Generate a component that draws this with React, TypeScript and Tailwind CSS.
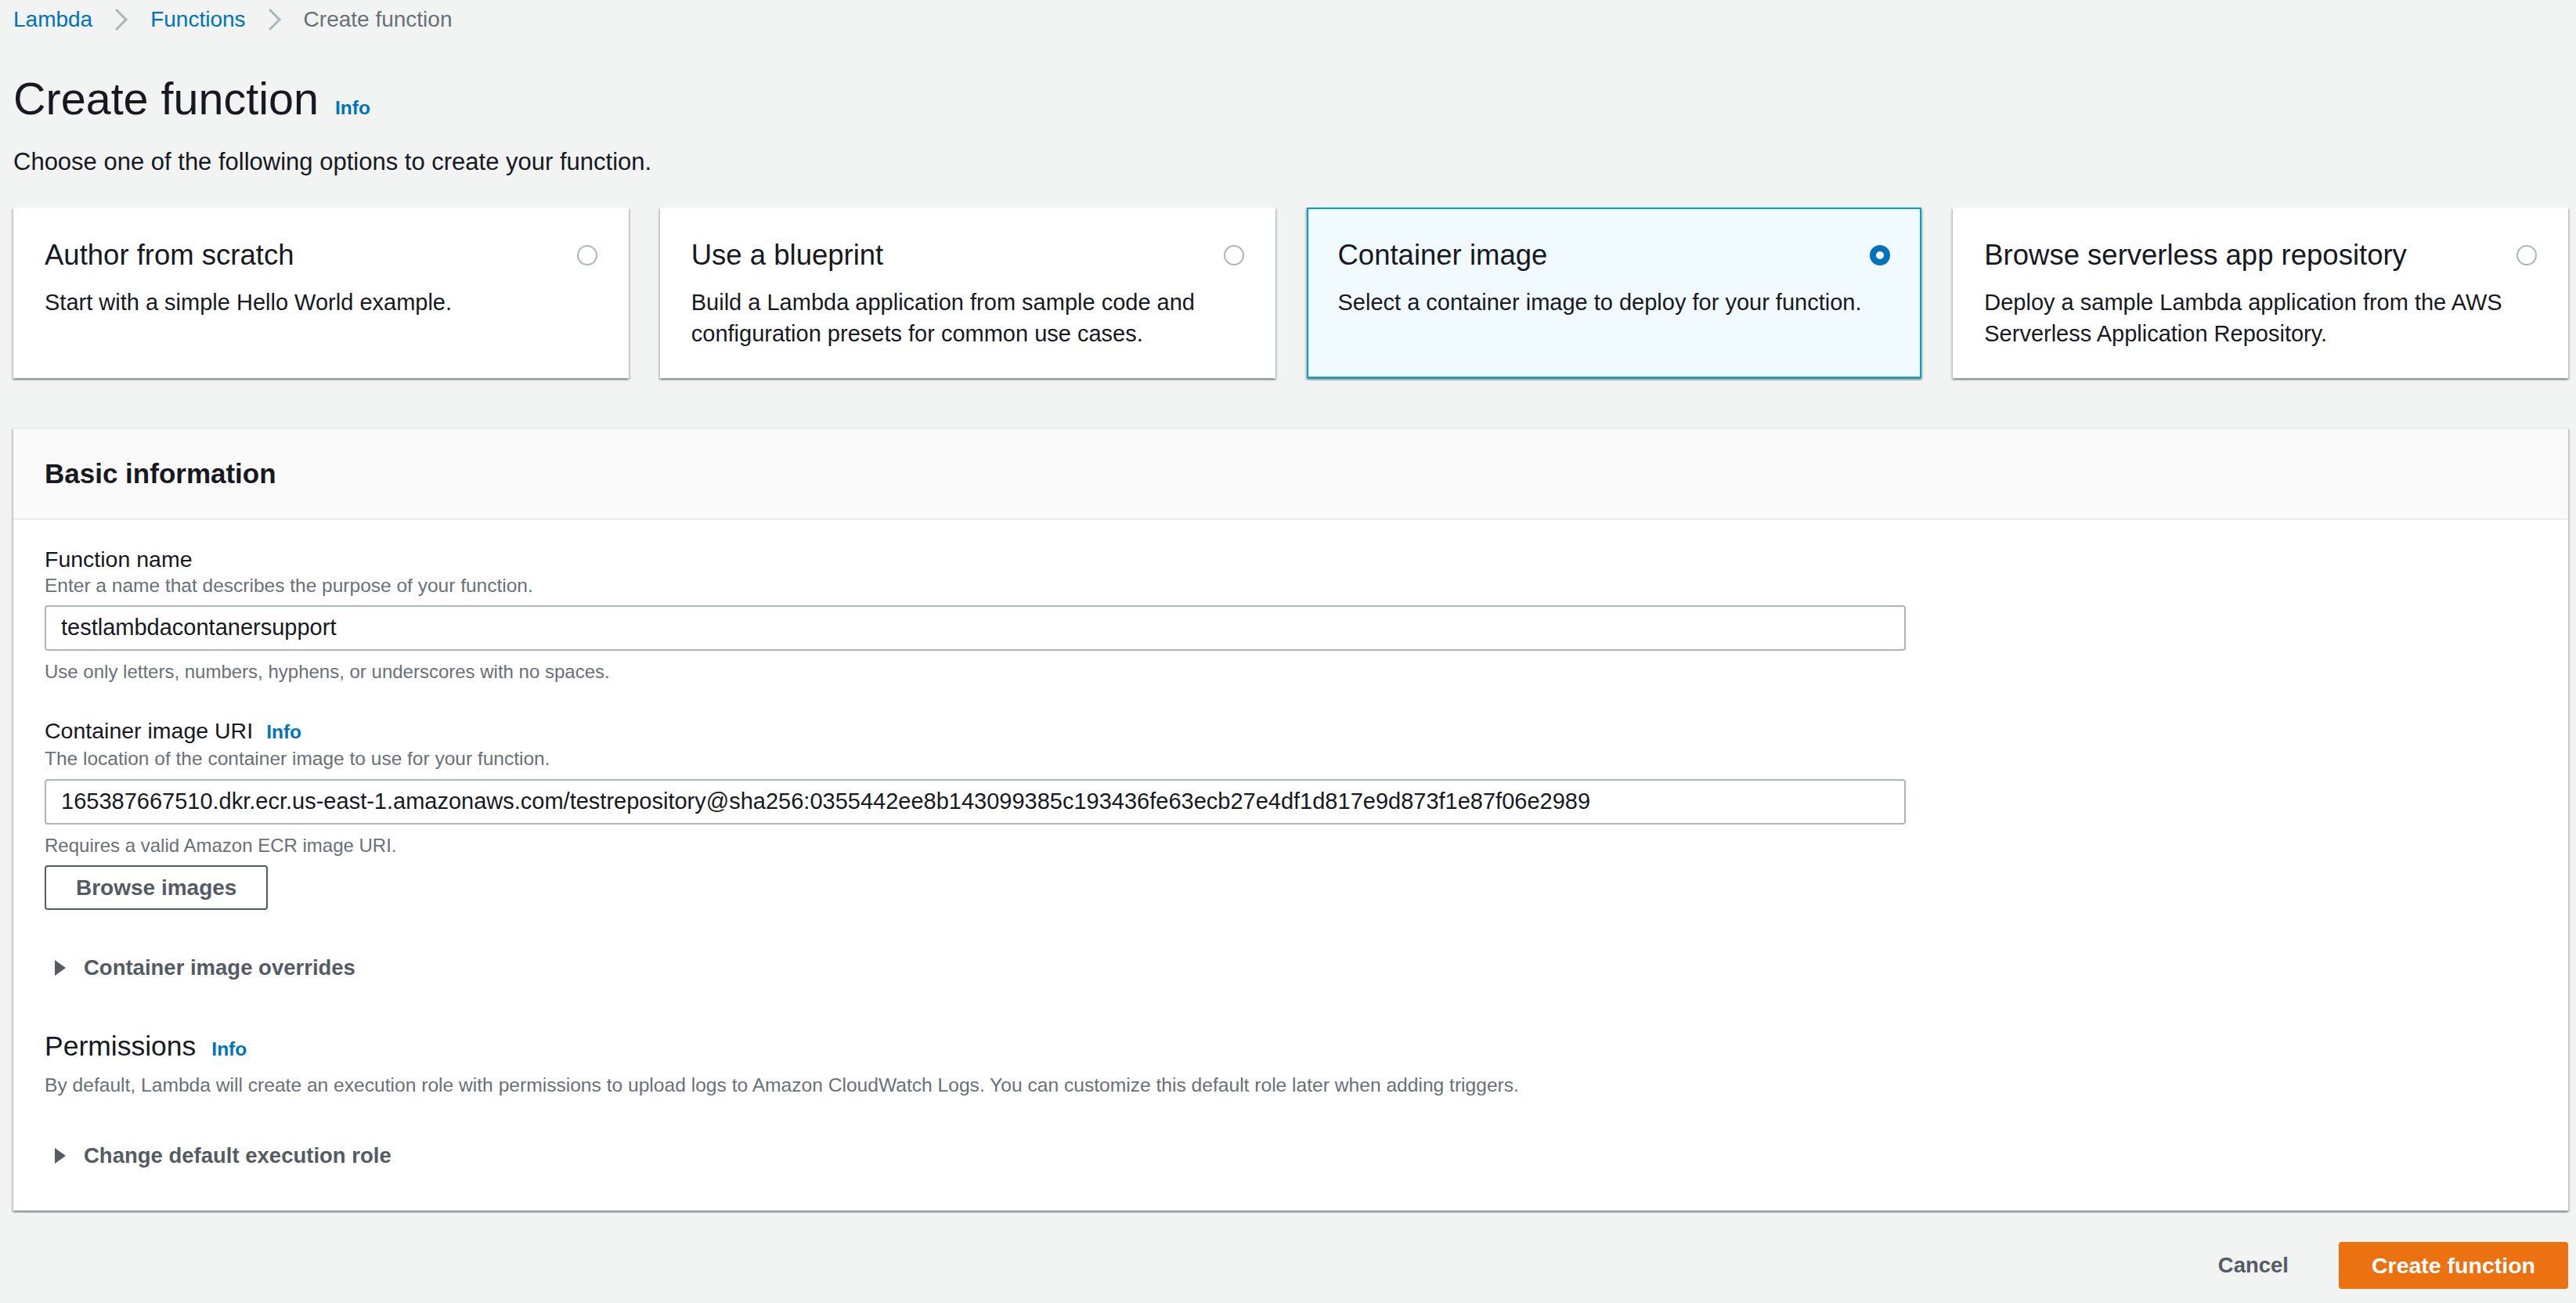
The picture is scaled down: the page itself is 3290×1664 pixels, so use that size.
const cards = [
  {
    title: 'Author from scratch',
    desc: 'Start with a simple Hello World example.',
    selected: false,
  },
  {
    title: 'Use a blueprint',
    desc: 'Build a Lambda application from sample code and configuration presets for common use cases.',
    selected: false,
  },
  {
    title: 'Container image',
    desc: 'Select a container image to deploy for your function.',
    selected: true,
  },
  {
    title: 'Browse serverless app repository',
    desc: 'Deploy a sample Lambda application from the AWS Serverless Application Repository.',
    selected: false,
  },
]

function Chevron() {
  return (
    <svg width="22" height="30" viewBox="0 0 22 30" className="mx-[26px]">
      <path d="M4 2 L17 15 L4 28" fill="none" stroke="#aab7b8" strokeWidth="3" />
    </svg>
  )
}

function Caret() {
  return (
    <svg width="16" height="20" viewBox="0 0 16 20" className="ml-[12px] mr-[22px]">
      <path d="M1 0 L15 10 L1 20 Z" fill="#545b64" />
    </svg>
  )
}

function Info({ className = '' }: { className?: string }) {
  return <span className={`text-[24.5px] font-bold text-[#0073bb] ${className}`}>Info</span>
}

export default function App() {
  return (
    <div className="w-[3290px] h-[1664px] overflow-hidden bg-[#f2f3f3] pl-[17px] pr-[10px] font-['Liberation_Sans',Arial,sans-serif] text-[#16191f]">
      {/* Breadcrumbs */}
      <div className="flex h-[50px] items-center text-[28px]">
        <span className="text-[#0073bb]">Lambda</span>
        <Chevron />
        <span className="text-[#0073bb]">Functions</span>
        <Chevron />
        <span className="text-[#687078]">Create function</span>
      </div>

      {/* Title */}
      <div className="mt-[36px] flex h-[80px] items-baseline leading-[80px]">
        <h1 className="text-[57.5px] font-normal">Create function</h1>
        <Info className="ml-[21px]" />
      </div>
      <p className="mt-[21px] h-[40px] text-[31px] leading-[40px]">
        Choose one of the following options to create your function.
      </p>

      {/* Option tiles */}
      <div className="mt-[38px] grid h-[218px] grid-cols-4 gap-[40px]">
        {cards.map((c) => (
          <div
            key={c.title}
            className={`border-2 px-[38px] pt-[37px] shadow-[0_2px_2px_0_rgba(0,28,36,0.3),2px_2px_2px_0_rgba(0,28,36,0.15),-2px_2px_2px_0_rgba(0,28,36,0.15)] ${
              c.selected ? 'border-[#00a1c9] bg-[#f1faff]' : 'border-white bg-white'
            }`}
          >
            <div className="flex h-[44px] items-center justify-between">
              <span className="text-[36.5px] leading-[44px]">{c.title}</span>
              {c.selected ? (
                <span className="h-[26px] w-[26px] rounded-full border-[8px] border-[#0073bb] bg-white" />
              ) : (
                <span className="h-[26px] w-[26px] rounded-full border-2 border-[#aab7b8] bg-white" />
              )}
            </div>
            <p className="mt-[18px] text-[29px] leading-[40px]">{c.desc}</p>
          </div>
        ))}
      </div>

      {/* Basic information */}
      <div className="mt-[63px] h-[1000px] border-t-2 border-[#eaeded] bg-white shadow-[0_2px_2px_0_rgba(0,28,36,0.3),2px_2px_2px_0_rgba(0,28,36,0.15),-2px_2px_2px_0_rgba(0,28,36,0.15)]">
        <div className="flex h-[116px] items-center border-b-2 border-[#eaeded] bg-[#fafafa] px-[40px]">
          <h2 className="text-[35px] font-bold">Basic information</h2>
        </div>

        <div className="px-[40px] pt-[32px]">
          <div className="text-[28.5px] leading-[36px]">Function name</div>
          <div className="text-[24.5px] leading-[32px] text-[#687078]">
            Enter a name that describes the purpose of your function.
          </div>
          <div className="mt-[9px] flex h-[58px] w-[2377px] items-center rounded-[4px] border-2 border-[#aab7b8] pl-[19px] text-[29px]">
            testlambdacontanersupport
          </div>
          <div className="mt-[11px] text-[24px] leading-[32px] text-[#687078]">
            Use only letters, numbers, hyphens, or underscores with no spaces.
          </div>

          <div className="mt-[41px] flex items-baseline text-[28.5px] leading-[36px]">
            <span>Container image URI</span>
            <Info className="ml-[17px]" />
          </div>
          <div className="text-[24.5px] leading-[32px] text-[#687078]">
            The location of the container image to use for your function.
          </div>
          <div className="mt-[10px] flex h-[58px] w-[2377px] items-center rounded-[4px] border-2 border-[#aab7b8] pl-[19px] text-[29px]">
            165387667510.dkr.ecr.us-east-1.amazonaws.com/testrepository@sha256:0355442ee8b143099385c193436fe63ecb27e4df1d817e9d873f1e87f06e2989
          </div>
          <div className="mt-[11px] text-[24px] leading-[32px] text-[#687078]">
            Requires a valid Amazon ECR image URI.
          </div>
          <button className="mt-[9px] h-[57px] rounded-[4px] border-2 border-[#545b64] bg-white px-[38px] text-[28px] font-bold text-[#545b64]">
            Browse images
          </button>

          <div className="mt-[54px] flex h-[40px] items-center text-[27.5px] font-bold text-[#545b64]">
            <Caret />
            Container image overrides
          </div>

          <div className="mt-[58px] flex h-[44px] items-baseline leading-[44px]">
            <span className="text-[35.5px]">Permissions</span>
            <Info className="ml-[20px]" />
          </div>
          <div className="mt-[12px] text-[24.6px] leading-[32px] text-[#687078]">
            By default, Lambda will create an execution role with permissions to upload logs to Amazon CloudWatch Logs. You can customize this default role later when adding triggers.
          </div>

          <div className="mt-[54px] flex h-[40px] items-center text-[27.5px] font-bold text-[#545b64]">
            <Caret />
            Change default execution role
          </div>
        </div>
      </div>

      {/* Footer actions */}
      <div className="mt-[40px] flex items-center justify-end gap-[64px]">
        <button className="text-[27.5px] font-bold text-[#545b64]">Cancel</button>
        <button className="h-[60px] rounded-[4px] bg-[#ec7211] px-[42px] text-[28.5px] font-bold text-white">
          Create function
        </button>
      </div>
    </div>
  )
}
